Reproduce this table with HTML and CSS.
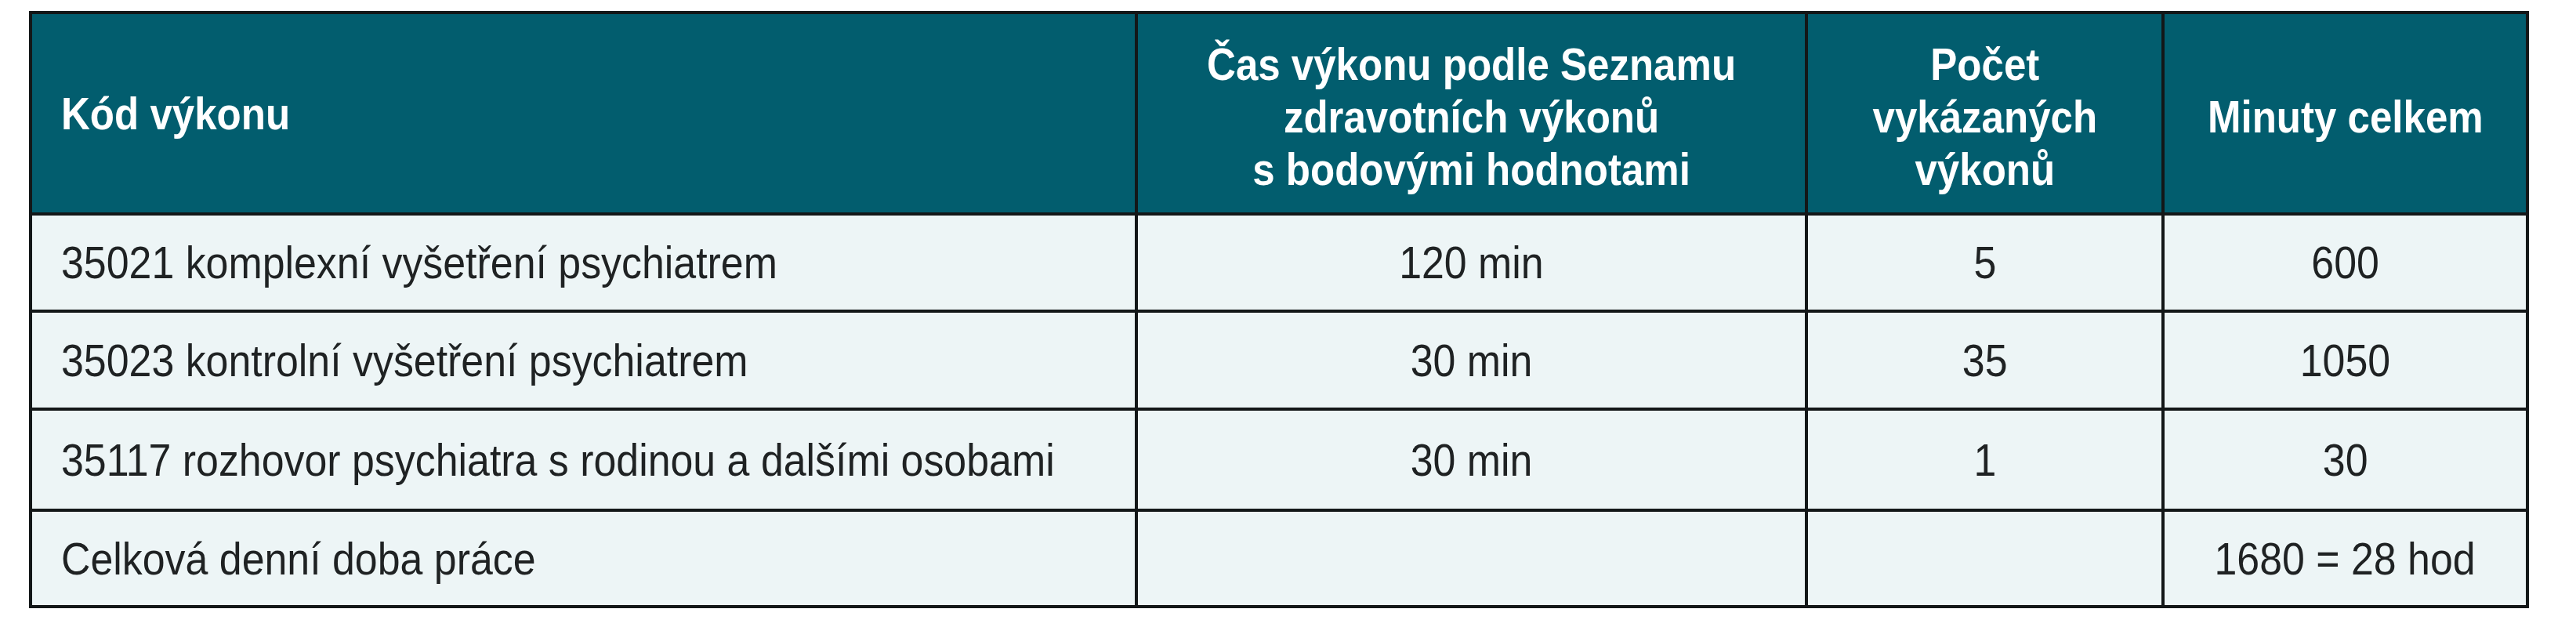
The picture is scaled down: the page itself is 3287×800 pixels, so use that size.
FILE: index.html
```html
<!DOCTYPE html>
<html lang="cs">
<head>
<meta charset="utf-8">
<title>Kód výkonu</title>
<link rel="stylesheet" href="styles.css">
</head>
<body>
<table class="perf">
  <colgroup>
    <col class="c-code">
    <col class="c-time">
    <col class="c-count">
    <col class="c-total">
  </colgroup>
  <thead>
    <tr class="head-row">
      <th class="left"><span class="t">Kód výkonu</span></th>
      <th><span class="t">Čas výkonu podle Seznamu<br>zdravotních výkonů<br>s bodovými hodnotami</span></th>
      <th><span class="t">Počet<br>vykázaných<br>výkonů</span></th>
      <th><span class="t">Minuty celkem</span></th>
    </tr>
  </thead>
  <tbody>
    <tr class="body-row r1">
      <td class="left"><span class="t">35021 komplexní vyšetření psychiatrem</span></td>
      <td><span class="t">120 min</span></td>
      <td><span class="t">5</span></td>
      <td><span class="t">600</span></td>
    </tr>
    <tr class="body-row r2">
      <td class="left"><span class="t">35023 kontrolní vyšetření psychiatrem</span></td>
      <td><span class="t">30 min</span></td>
      <td><span class="t">35</span></td>
      <td><span class="t">1050</span></td>
    </tr>
    <tr class="body-row r3">
      <td class="left"><span class="t">35117 rozhovor psychiatra s rodinou a dalšími osobami</span></td>
      <td><span class="t">30 min</span></td>
      <td><span class="t">1</span></td>
      <td><span class="t">30</span></td>
    </tr>
    <tr class="body-row r4">
      <td class="left"><span class="t">Celková denní doba práce</span></td>
      <td></td>
      <td></td>
      <td><span class="t">1680 = 28 hod</span></td>
    </tr>
  </tbody>
</table>
</body>
</html>
```
FILE: styles.css
```css
html, body {
  margin: 0;
  padding: 0;
  background: #ffffff;
}

.perf {
  margin: 14px 0 0 37px;
  width: 3190px;
  table-layout: fixed;
  border-collapse: separate;
  border-spacing: 0;
  border-top: 4px solid #131718;
  border-left: 4px solid #131718;
  font-family: "Liberation Sans", Arial, sans-serif;
}

.c-code { width: 1411px; }
.c-time { width: 855px; }
.c-count { width: 455px; }
.c-total { width: 465px; }

.perf th,
.perf td {
  box-sizing: border-box;
  border-right: 4px solid #131718;
  border-bottom: 4px solid #131718;
  padding: 0;
  text-align: center;
  vertical-align: middle;
}

.perf .t {
  display: inline-block;
  white-space: nowrap;
  transform-origin: center center;
}

.perf th {
  background: #025d6e;
  color: #ffffff;
  font-weight: 700;
  font-size: 58px;
  line-height: 67px;
  padding-top: 8px;
}

.perf th .t {
  transform: scaleX(0.88);
}

.perf td {
  background: #edf5f6;
  color: #1f2223;
  font-weight: 400;
  font-size: 57px;
  line-height: 64px;
}

.perf td .t {
  transform: scaleX(0.91);
}

.perf .left {
  text-align: left;
  padding-left: 37px;
}

.perf th.left {
  padding-top: 0;
}

.perf .left .t {
  transform-origin: left center;
}

.head-row { height: 257px; }
.r1 { height: 124px; }
.r2 { height: 125px; }
.r3 { height: 129px; }
.r4 { height: 123px; }
```
